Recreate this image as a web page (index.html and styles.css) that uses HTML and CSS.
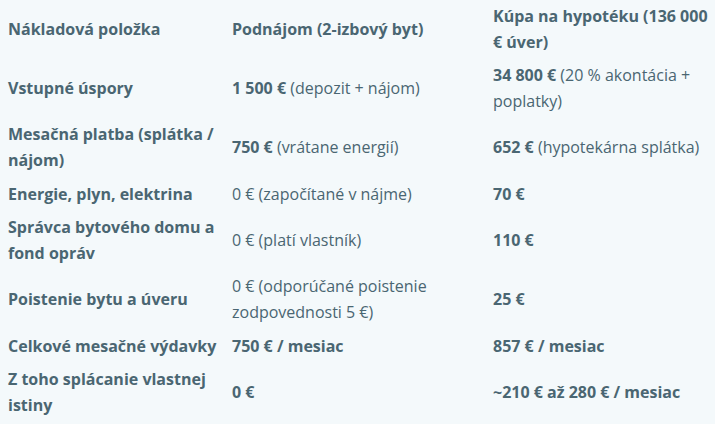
FILE: index.html
```html
<!DOCTYPE html>
<html lang="sk">
<head>
<meta charset="utf-8">
<title>Porovnanie nákladov</title>
<link rel="stylesheet" href="styles.css">
</head>
<body>
<table class="costs">
  <colgroup>
    <col class="c1">
    <col class="c2">
    <col class="c3">
  </colgroup>
  <thead>
    <tr>
      <th>Nákladová položka</th>
      <th>Podnájom (2-izbový byt)</th>
      <th>Kúpa na hypotéku (136 000 € úver)</th>
    </tr>
  </thead>
  <tbody>
    <tr>
      <th>Vstupné úspory</th>
      <td><strong>1 500 €</strong> (depozit + nájom)</td>
      <td><strong>34 800 €</strong> (20 % akontácia + poplatky)</td>
    </tr>
    <tr>
      <th>Mesačná platba (splátka / nájom)</th>
      <td><strong>750 €</strong> (vrátane energií)</td>
      <td><strong>652 €</strong> (hypotekárna splátka)</td>
    </tr>
    <tr>
      <th>Energie, plyn, elektrina</th>
      <td>0 € (započítané v nájme)</td>
      <td><strong>70 €</strong></td>
    </tr>
    <tr>
      <th>Správca bytového domu a fond opráv</th>
      <td>0 € (platí vlastník)</td>
      <td><strong>110 €</strong></td>
    </tr>
    <tr>
      <th>Poistenie bytu a úveru</th>
      <td>0 € (odporúčané poistenie zodpovednosti 5 €)</td>
      <td><strong>25 €</strong></td>
    </tr>
    <tr>
      <th>Celkové mesačné výdavky</th>
      <td><strong>750 € / mesiac</strong></td>
      <td><strong>857 € / mesiac</strong></td>
    </tr>
    <tr>
      <th>Z toho splácanie vlastnej istiny</th>
      <td><strong>0 €</strong></td>
      <td><strong>~210 € až 280 € / mesiac</strong></td>
    </tr>
  </tbody>
</table>
</body>
</html>
```

FILE: styles.css
```css
html, body {
  margin: 0;
  padding: 0;
  background: #f4f9fb;
}

body {
  font-family: "Open Sans", "Noto Sans", sans-serif;
  font-size: 16px;
  line-height: 1.6;
  color: #4a6672;
}

.costs {
  width: 715px;
  border-collapse: collapse;
  table-layout: fixed;
}

.c1 { width: 224px; }
.c2 { width: 261px; }
.c3 { width: 230px; }

.costs th,
.costs td {
  padding: 4px 2px 4px 8px;
  text-align: left;
  vertical-align: middle;
}

.costs th {
  font-weight: 700;
}

.costs td {
  font-weight: 400;
}

.costs strong {
  font-weight: 700;
}
```
